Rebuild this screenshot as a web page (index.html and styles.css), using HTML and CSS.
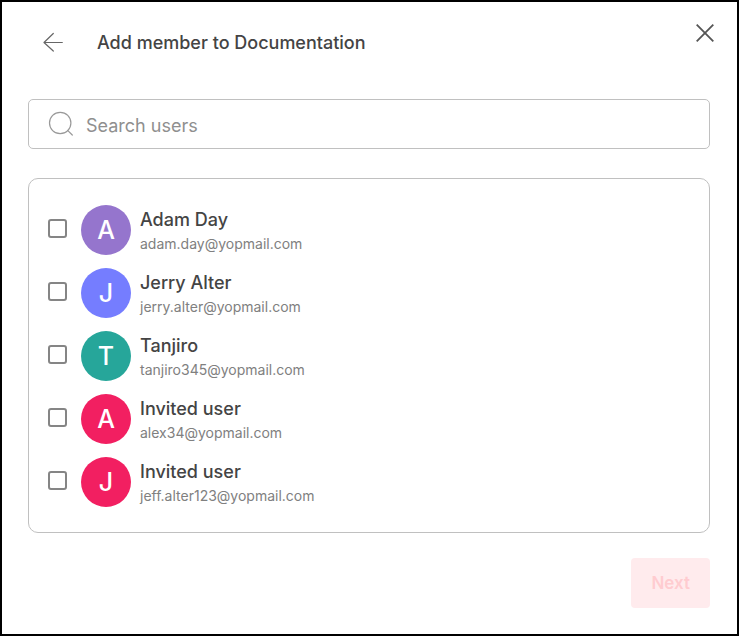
FILE: index.html
```html
<!DOCTYPE html>
<html lang="en">
<head>
    <meta charset="UTF-8">
    <meta name="viewport" content="width=device-width, initial-scale=1.0">
    <title>Add member to Documentation</title>
    <link rel="stylesheet" href="styles.css">
</head>
<body>
    <form class="dialog">
        <header class="dialog-header">
            <button type="button" class="icon-btn back-btn" aria-label="Back">
                <svg width="20" height="20" viewBox="0 0 20 20" fill="none" stroke="currentColor" stroke-width="1.2" stroke-linecap="round" stroke-linejoin="round">
                    <path d="M19.3 10.5H1M10.3 1.5L1 10.5l9.3 8.5"/>
                </svg>
            </button>
            <h1>Add member to Documentation</h1>
            <button type="button" class="icon-btn close-btn" aria-label="Close">
                <svg width="18" height="18" viewBox="0 0 18 18" fill="none" stroke="currentColor" stroke-width="1.8">
                    <path d="M.7.7l16.6 16.6M17.3.7L.7 17.3"/>
                </svg>
            </button>
        </header>
        <label class="search">
            <svg width="26" height="26" viewBox="0 0 26 26" fill="none" stroke="currentColor" stroke-width="1.2" stroke-linecap="round">
                <circle cx="12.2" cy="12" r="10.7"/>
                <path d="M19.6 19.4l4.7 4.6"/>
            </svg>
            <input type="text" placeholder="Search users" aria-label="Search users">
        </label>
        <div class="user-list">
            <label class="user">
                <input type="checkbox">
                <span class="avatar purple">A</span>
                <span class="info">
                    <span class="name">Adam Day</span>
                    <span class="email">adam.day@yopmail.com</span>
                </span>
            </label>
            <label class="user">
                <input type="checkbox">
                <span class="avatar blue">J</span>
                <span class="info">
                    <span class="name">Jerry Alter</span>
                    <span class="email">jerry.alter@yopmail.com</span>
                </span>
            </label>
            <label class="user">
                <input type="checkbox">
                <span class="avatar teal">T</span>
                <span class="info">
                    <span class="name">Tanjiro</span>
                    <span class="email">tanjiro345@yopmail.com</span>
                </span>
            </label>
            <label class="user">
                <input type="checkbox">
                <span class="avatar pink">A</span>
                <span class="info">
                    <span class="name">Invited user</span>
                    <span class="email">alex34@yopmail.com</span>
                </span>
            </label>
            <label class="user">
                <input type="checkbox">
                <span class="avatar pink">J</span>
                <span class="info">
                    <span class="name">Invited user</span>
                    <span class="email">jeff.alter123@yopmail.com</span>
                </span>
            </label>
        </div>
        <footer class="dialog-footer">
            <button type="submit" class="next-btn" disabled>Next</button>
        </footer>
    </form>
</body>
</html>
```
FILE: styles.css
```css
* {
    box-sizing: border-box;
}
body {
    margin: 0;
    background: #fff;
    color: #444;
    font-family: Inter, Arial, sans-serif;
    font-optical-sizing: none;
}
button, input {
    font-family: inherit;
    font-optical-sizing: inherit;
}
.dialog {
    min-height: 100vh;
    padding: 20px 27px 20px 26px;
    border: 2px solid #000;
}
.dialog-header {
    display: flex;
    align-items: flex-start;
    margin-bottom: 44px;
    padding-left: 15px;
}
.dialog-header h1 {
    flex: 1;
    margin: 9px 0 0 34px;
    font-size: 18px;
    font-weight: 500;
    line-height: 24px;
}
.icon-btn {
    display: flex;
    padding: 0;
    border: none;
    background: none;
    cursor: pointer;
}
.back-btn {
    margin-top: 10px;
    color: #666;
}
.close-btn {
    margin: 2px -4px 0 0;
    color: #555;
}
.search {
    display: flex;
    align-items: center;
    gap: 12px;
    height: 50px;
    margin-bottom: 29px;
    padding: 0 19px;
    border: 1px solid #c0c0c0;
    border-radius: 5px;
    color: #999;
}
.search input {
    flex: 1;
    min-width: 0;
    padding: 2px 0 0;
    border: none;
    outline: none;
    background: none;
    color: #444;
    font-size: 18px;
}
.search input::placeholder {
    color: #8f8f8f;
}
.user-list {
    display: flex;
    flex-direction: column;
    gap: 13px;
    padding: 26px 19px 25px;
    border: 1px solid #c0c0c0;
    border-radius: 10px;
}
.user {
    display: flex;
    align-items: center;
    cursor: pointer;
}
.user input {
    appearance: none;
    width: 19px;
    height: 19px;
    margin: 0 14px 4px 0;
    border: 2px solid #858585;
    border-radius: 3px;
}
.user input:checked {
    background: #858585;
}
.avatar {
    display: flex;
    align-items: center;
    justify-content: center;
    width: 50px;
    height: 50px;
    margin-right: 9px;
    border-radius: 50%;
    color: #fff;
    font-size: 25px;
    font-weight: 500;
}
.purple {
    background: #9575cd;
}
.blue {
    background: #757dff;
}
.teal {
    background: #26a69a;
}
.pink {
    background: #f21f61;
}
.info {
    display: flex;
    flex-direction: column;
    padding-top: 2px;
}
.name {
    font-size: 18px;
    font-weight: 500;
    line-height: 26px;
}
.email {
    color: #808080;
    font-size: 14px;
    line-height: 22px;
}
.dialog-footer {
    display: flex;
    justify-content: flex-end;
    margin-top: 25px;
}
.next-btn {
    height: 50px;
    padding: 0 20px;
    border: none;
    border-radius: 4px;
    background: #ffebed;
    color: #ffccd0;
    font-size: 17px;
    font-weight: 600;
}
```
